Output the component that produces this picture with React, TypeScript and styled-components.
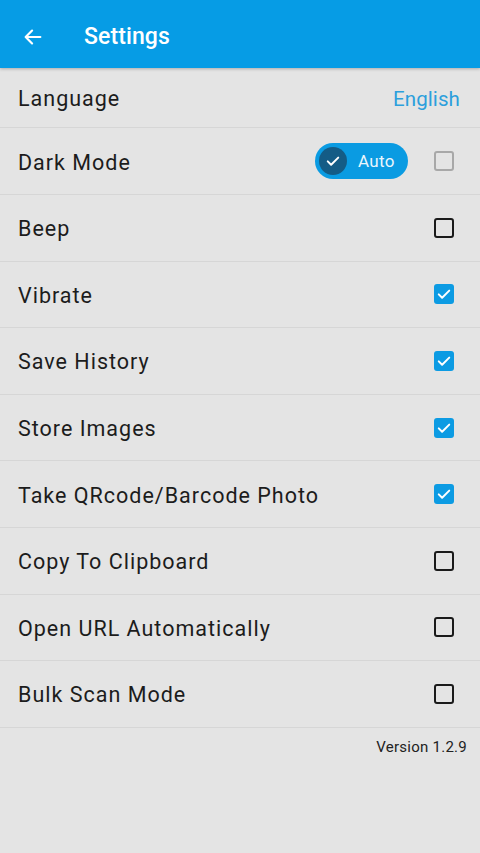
import React from "react";
import styled, { createGlobalStyle } from "styled-components";

const GlobalStyle = createGlobalStyle`
    html, body {
        margin: 0;
        padding: 0;
        background: #e4e4e4;
        font-family: Roboto, "Noto Sans", sans-serif;
    }
`

const items: Array<{ title: string, checked: boolean }> = [
    {title: "Beep", checked: false},
    {title: "Vibrate", checked: true},
    {title: "Save History", checked: true},
    {title: "Store Images", checked: true},
    {title: "Take QRcode/Barcode Photo", checked: true},
    {title: "Copy To Clipboard", checked: false},
    {title: "Open URL Automatically", checked: false},
    {title: "Bulk Scan Mode", checked: false},
]

const CheckIcon = (props: { size: number }) => (
    <svg width={props.size} height={props.size} viewBox="0 0 24 24" fill="none" stroke="#fff"
         strokeWidth={2.6} strokeLinecap="round" strokeLinejoin="round">
        <path d="M5 12.5l4.5 4.5L19 7.5"/>
    </svg>
)

export default function App() {
    return (
        <Page>
            <GlobalStyle/>
            <Header>
                <BackButton>
                    <svg width="22" height="22" viewBox="0 0 24 24" fill="none" stroke="#fff" strokeWidth={2.4}
                         strokeLinecap="round" strokeLinejoin="round">
                        <path d="M20 12H4.5M11 5l-7 7 7 7"/>
                    </svg>
                </BackButton>
                <Title>Settings</Title>
            </Header>
            <List>
                <Row height={60}>
                    <Label>Language</Label>
                    <LinkValue>English</LinkValue>
                </Row>
                <Row height={67}>
                    <Label>Dark Mode</Label>
                    <Controls>
                        <AutoPill>
                            <Knob><CheckIcon size={18}/></Knob>
                            <PillText>Auto</PillText>
                        </AutoPill>
                        <Checkbox checked={false} disabled/>
                    </Controls>
                </Row>
                {items.map((item, index) => (
                    <Row key={index} height={66.6}>
                        <Label>{item.title}</Label>
                        <Checkbox checked={item.checked}>
                            {item.checked && <CheckIcon size={18}/>}
                        </Checkbox>
                    </Row>
                ))}
            </List>
            <Version>Version 1.2.9</Version>
        </Page>
    )
}

const Page = styled.div`
    min-height: 853px;
    background: #e4e4e4;
`

const Header = styled.header`
    height: 68px;
    box-sizing: border-box;
    padding-top: 5px;
    display: flex;
    align-items: center;
    background: #069ce5;
    box-shadow: 0 1px 3px rgba(0, 0, 0, 0.25);
    position: relative;
`

const BackButton = styled.div`
    width: 22px;
    height: 22px;
    margin-left: 22px;
    margin-right: 40px;
    display: flex;
`

const Title = styled.h1`
    margin: 0;
    color: #fff;
    font-size: 23px;
    font-weight: 500;
    letter-spacing: 0.1px;
`

const List = styled.div`
    display: flex;
    flex-direction: column;
`

const Row = styled.div<{ height: number }>`
    height: ${p => p.height}px;
    box-sizing: border-box;
    display: flex;
    align-items: center;
    justify-content: space-between;
    padding: 0 20px 0 18px;
    border-bottom: 1.5px solid #d6d6d6;
`

const Label = styled.span`
    font-size: 21.5px;
    color: #1c1c1c;
    letter-spacing: 1px;
    padding-top: 2px;
`

const LinkValue = styled.span`
    font-size: 20.5px;
    color: #2c9fdc;
    letter-spacing: 0.1px;
    padding-top: 2px;
`

const Controls = styled.div`
    display: flex;
    align-items: center;
    gap: 26px;
`

const AutoPill = styled.div`
    width: 93px;
    height: 36px;
    box-sizing: border-box;
    border-radius: 18px;
    background: #0a9be2;
    display: flex;
    align-items: center;
    padding-left: 4px;
    gap: 11px;
`

const Knob = styled.div`
    width: 28px;
    height: 28px;
    border-radius: 50%;
    background: #145c86;
    display: flex;
    align-items: center;
    justify-content: center;
`

const PillText = styled.span`
    color: #e9f6fd;
    font-size: 17px;
    letter-spacing: 0.3px;
`

const Checkbox = styled.div<{ checked: boolean, disabled?: boolean }>`
    width: 20px;
    height: 20px;
    box-sizing: border-box;
    border-radius: 3px;
    display: flex;
    align-items: center;
    justify-content: center;
    margin-right: 6px;
    background: ${p => p.checked ? "#0c9be3" : "transparent"};
    border: ${p => p.checked ? "none" : p.disabled ? "2px solid #a8a8a8" : "2px solid #1a1a1a"};
`

const Version = styled.div`
    text-align: right;
    padding: 10px 13px 0 0;
    font-size: 15px;
    color: #222;
    letter-spacing: 0.25px;
`
